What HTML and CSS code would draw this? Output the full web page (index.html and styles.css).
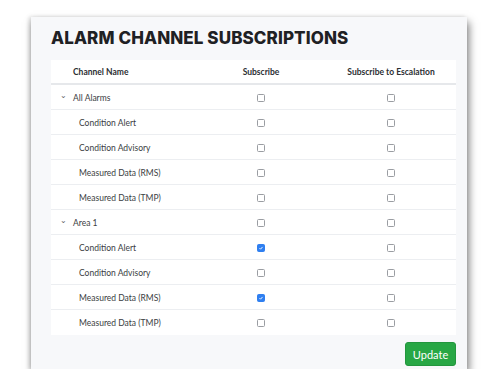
FILE: index.html
```html
<!DOCTYPE html>
<html lang="en">
<head>
    <meta charset="UTF-8">
    <title>Alarm Channel Subscriptions</title>
    <link rel="stylesheet" href="styles.css">
</head>
<body>

    <div class="card">
        <h1 class="title">ALARM CHANNEL SUBSCRIPTIONS</h1>

        <div class="table">
            <div class="row head">
                <div class="cell name">Channel Name</div>
                <div class="cell center">Subscribe</div>
                <div class="cell center">Subscribe to Escalation</div>
            </div>

            <!-- All Alarms group -->
            <div class="row">
                <div class="cell name group"><span class="chev">&#8964;</span>All Alarms</div>
                <div class="cell center"><span class="box"></span></div>
                <div class="cell center"><span class="box"></span></div>
            </div>
            <div class="row">
                <div class="cell name child">Condition Alert</div>
                <div class="cell center"><span class="box"></span></div>
                <div class="cell center"><span class="box"></span></div>
            </div>
            <div class="row">
                <div class="cell name child">Condition Advisory</div>
                <div class="cell center"><span class="box"></span></div>
                <div class="cell center"><span class="box"></span></div>
            </div>
            <div class="row">
                <div class="cell name child">Measured Data (RMS)</div>
                <div class="cell center"><span class="box"></span></div>
                <div class="cell center"><span class="box"></span></div>
            </div>
            <div class="row">
                <div class="cell name child">Measured Data (TMP)</div>
                <div class="cell center"><span class="box"></span></div>
                <div class="cell center"><span class="box"></span></div>
            </div>

            <!-- Area 1 group -->
            <div class="row">
                <div class="cell name group"><span class="chev">&#8964;</span>Area 1</div>
                <div class="cell center"><span class="box"></span></div>
                <div class="cell center"><span class="box"></span></div>
            </div>
            <div class="row">
                <div class="cell name child">Condition Alert</div>
                <div class="cell center"><span class="box checked"><svg viewBox="0 0 8 8"><path d="M2 4.2 L3.4 5.6 L6 2.6" /></svg></span></div>
                <div class="cell center"><span class="box"></span></div>
            </div>
            <div class="row">
                <div class="cell name child">Condition Advisory</div>
                <div class="cell center"><span class="box"></span></div>
                <div class="cell center"><span class="box"></span></div>
            </div>
            <div class="row">
                <div class="cell name child">Measured Data (RMS)</div>
                <div class="cell center"><span class="box checked"><svg viewBox="0 0 8 8"><path d="M2 4.2 L3.4 5.6 L6 2.6" /></svg></span></div>
                <div class="cell center"><span class="box"></span></div>
            </div>
            <div class="row last">
                <div class="cell name child">Measured Data (TMP)</div>
                <div class="cell center"><span class="box"></span></div>
                <div class="cell center"><span class="box"></span></div>
            </div>
        </div>

        <div class="actions">
            <button class="btn-update">Update</button>
        </div>
    </div>

</body>
</html>
```

FILE: styles.css
```css
body {
    margin: 0;
    padding: 0;
    background-color: #fff;
    font-family: Lato, "Open Sans", Arial, sans-serif;
    color: #333;
}
.card {
    margin: 17px 0 0 31px;
    width: 436px;
    height: 352px;
    box-sizing: border-box;
    padding: 10px 11px 0 20px;
    background-color: #f7f8fa;
    box-shadow: 2px 5px 8px rgba(0, 0, 0, 0.5), -2px 0 4px rgba(0, 0, 0, 0.15);
}
.title {
    margin: 0;
    height: 33px;
    font-family: Inter, "Open Sans", sans-serif;
    font-size: 17px;
    font-weight: 800;
    line-height: 22px;
    letter-spacing: 0.1px;
    color: #1f2124;
}
.table {
    background-color: #fff;
    width: 405px;
}
.row {
    display: grid;
    grid-template-columns: 145px 130px 130px;
    height: 25px;
    border-bottom: 1px solid #eceef1;
    box-sizing: border-box;
}
.row.head {
    border-bottom: 2px solid #e6e8eb;
}
.row.last {
    border-bottom: none;
}
.cell {
    display: flex;
    align-items: center;
    padding-top: 1px;
    font-size: 8.5px;
    color: #3a3d42;
}
.head .cell {
    font-weight: 700;
    color: #2c2f33;
}
.cell.name {
    padding-left: 22px;
}
.cell.child {
    padding-left: 28px;
}
.cell.group {
    padding-left: 9px;
}
.chev {
    width: 13px;
    font-size: 8px;
    color: #666;
    margin-top: -5px;
}
.cell.center {
    justify-content: center;
}
.box {
    display: flex;
    align-items: center;
    justify-content: center;
    width: 6px;
    height: 6px;
    border: 1px solid #9a9da2;
    border-radius: 1.5px;
    background-color: #fff;
}
.box.checked {
    background-color: #2f7ff0;
    border-color: #2f7ff0;
}
.box svg {
    width: 8px;
    height: 8px;
    fill: none;
    stroke: #fff;
    stroke-width: 1.2;
}
.actions {
    display: flex;
    justify-content: flex-end;
    width: 405px;
    margin-top: 7px;
}
.btn-update {
    width: 51px;
    height: 24px;
    background-color: #28a745;
    border: 1px solid #23963e;
    border-radius: 3px;
    color: #fff;
    font-family: Lato, "Open Sans", sans-serif;
    font-size: 11px;
    padding: 0;
}
```
